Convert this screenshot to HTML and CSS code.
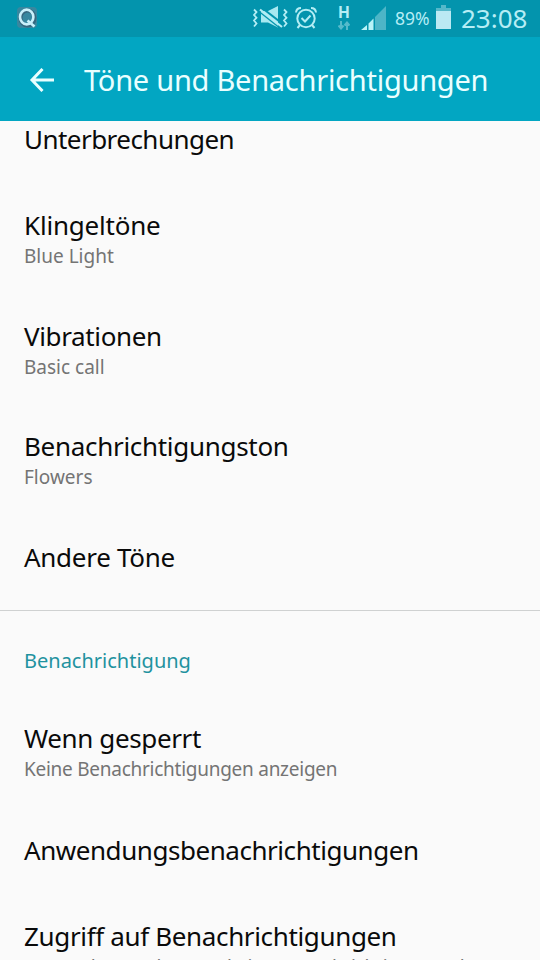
FILE: index.html
```html
<!DOCTYPE html>
<html lang="de">
<head>
<meta charset="utf-8">
<title>Töne und Benachrichtigungen</title>
<link rel="stylesheet" href="styles.css">
</head>
<body>
<div class="screen">
  <div class="status">
    <svg class="app-icon" width="22" height="24" viewBox="0 0 22 24"><rect x="0" y="1" width="20" height="21" rx="4" fill="#4f8199" opacity=".7"/><ellipse cx="10.500" cy="12" rx="7" ry="7.600" fill="none" stroke="#37677e" stroke-width="4"/><ellipse cx="9.700" cy="11" rx="6.700" ry="7.400" fill="none" stroke="#c9f0fa" stroke-width="2.600"/><path d="M10.500 14.500l7 6" stroke="#c9f0fa" stroke-width="2.600"/></svg>
    <svg class="mute" width="37" height="24" viewBox="0 0 37 24" fill="none" stroke="#b3edf4" stroke-width="1.800"><path d="M2 3.500l2.500 2.500L2 9l2.500 2.700L2 14.500 4.500 17.500 2 20.500M32 3.500l2.500 2.500L32 9l2.500 2.700L32 14.500l2.500 3L32 20.500"/><path d="M9 5h7l10-5v21.500l-10-5H9z" fill="#a8e9f1" stroke="none"/><path d="M9.500 1.500l22 17" stroke="#0394ad" stroke-width="2"/><path d="M8 3.500l22 17.500" stroke-width="2.200"/><path d="M7 5.500l22 17.500" stroke="#0394ad" stroke-width="1.200"/></svg>
    <svg class="alarm" width="24" height="24" viewBox="0 0 24 24" fill="none" stroke="#b3edf4" stroke-width="2"><circle cx="12" cy="12.500" r="8.700"/><path d="M7.500 12l3.500 3.500 5.500-6M2 6.500c.3-3 2-4.500 5-4.500M22 6.500c-.3-3-2-4.500-5-4.500M6 19l-2.500 3M18 19l2.500 3"/></svg>
    <div class="net"><b>H</b><svg width="12" height="9" viewBox="0 0 12 9" fill="none" stroke="#55bacb" stroke-width="2"><path d="M3 0v7M.5 4.500L3 7.500l2.500-3M9 9V2M6.500 4.500L9 1.500l2.500 3"/></svg></div>
    <svg class="signal" width="25" height="24" viewBox="0 0 25 24"><path d="M14 24V11L25 0v24z" fill="#4db5c7"/><path d="M0 24l6-5v5zM7.500 24v-6.500l5-5V24z" fill="#b9f3f8"/></svg>
    <span class="percent">89%</span>
    <svg class="battery" width="15" height="24" viewBox="0 0 15 24"><path d="M5 0h5v3h5v4H0V3h5z" fill="#55b8ca"/><path d="M0 6h15v18H0z" fill="#bbe9f3"/></svg>
    <span class="clock">23:08</span>
  </div>
  <header class="bar">
    <svg class="back" width="26" height="24" viewBox="0 0 26 24" fill="none" stroke="#e9ffff" stroke-width="3"><path d="M25 12H3M13.500 1L3 12l10.500 11"/></svg>
    <h1>Töne und Benachrichtigungen</h1>
  </header>
  <main>
    <div class="row first"><div class="t t1">Unterbrechungen</div></div>
    <div class="row"><div class="t t2">Klingeltöne</div><div class="s">Blue Light</div></div>
    <div class="row"><div class="t t3">Vibrationen</div><div class="s">Basic call</div></div>
    <div class="row"><div class="t t4">Benachrichtigungston</div><div class="s">Flowers</div></div>
    <div class="row last"><div class="t t5">Andere Töne</div></div>
    <h2>Benachrichtigung</h2>
    <div class="row locked"><div class="t t6">Wenn gesperrt</div><div class="s long">Keine Benachrichtigungen anzeigen</div></div>
    <div class="row single"><div class="t t7">Anwendungsbenachrichtigungen</div></div>
    <div class="row"><div class="t t8">Zugriff auf Benachrichtigungen</div><div class="s long">Anwendungen können keine Benachrichtigungen lesen</div></div>
  </main>
</div>
</body>
</html>
```
FILE: styles.css
```css
* { box-sizing: border-box; margin: 0; padding: 0; }
html, body { height: 960px; overflow: hidden; }
body { font-family: "Noto Sans", sans-serif; background: #fafafa; }
.screen { width: 540px; height: 960px; overflow: hidden; display: flex; flex-direction: column; }
.status { height: 37px; flex: none; background: #0394ad; display: flex; align-items: flex-start; padding: 6px 0 0 17px; color: #b6edf5; }
.status svg { flex: none; }
.mute { margin-left: 213px; }
.alarm { margin-left: 5px; }
.net { width: 14px; margin-left: 19px; display: flex; flex-direction: column; align-items: center; }
.net b { font: 700 16px/13px Roboto, sans-serif; height: 14px; }
.net svg { margin-top: 1px; }
.signal { margin-left: 10px; }
.percent { font-size: 17.5px; line-height: 24px; margin-left: 9px; width: 36px; white-space: nowrap; }
.battery { margin: -1px 0 0 5px; }
.clock { font-size: 26px; line-height: 25px; margin-left: 10px; white-space: nowrap; }
.bar { height: 84px; flex: none; background: #02a6c2; display: flex; align-items: center; padding: 1px 0 0 29px; }
.back { flex: none; }
h1 { font-size: 29px; font-weight: 400; line-height: 40px; letter-spacing: -.25px; color: #e9ffff; margin-left: 29px; white-space: nowrap; }
main { flex: 1; min-height: 0; overflow: hidden; }
.row { padding: 25px 24px 22.5px; white-space: nowrap; }
.row.first { padding: 0 24px 25px; }
.row.single { padding-bottom: 25px; }
.t { font-size: 26px; line-height: 36px; color: #0a0a0a; }
.t1 { letter-spacing: -.54px; }
.t2 { letter-spacing: -.2px; }
.t3 { letter-spacing: -.36px; }
.t4 { letter-spacing: -.3px; }
.t5 { letter-spacing: -.28px; }
.t6 { letter-spacing: -.38px; }
.t7 { letter-spacing: -.45px; }
.t8 { letter-spacing: -.35px; }
.s { font-size: 19px; line-height: 27px; color: #747474; }
.long { letter-spacing: -.26px; }
.row.last { height: 97px; border-bottom: 1px solid #cfd1d1; }
h2 { font-size: 20px; font-weight: 400; line-height: 28px; color: #1f929f; padding: 36px 24px 0; }
.row.locked { padding: 45.5px 24px 24px; }
```
